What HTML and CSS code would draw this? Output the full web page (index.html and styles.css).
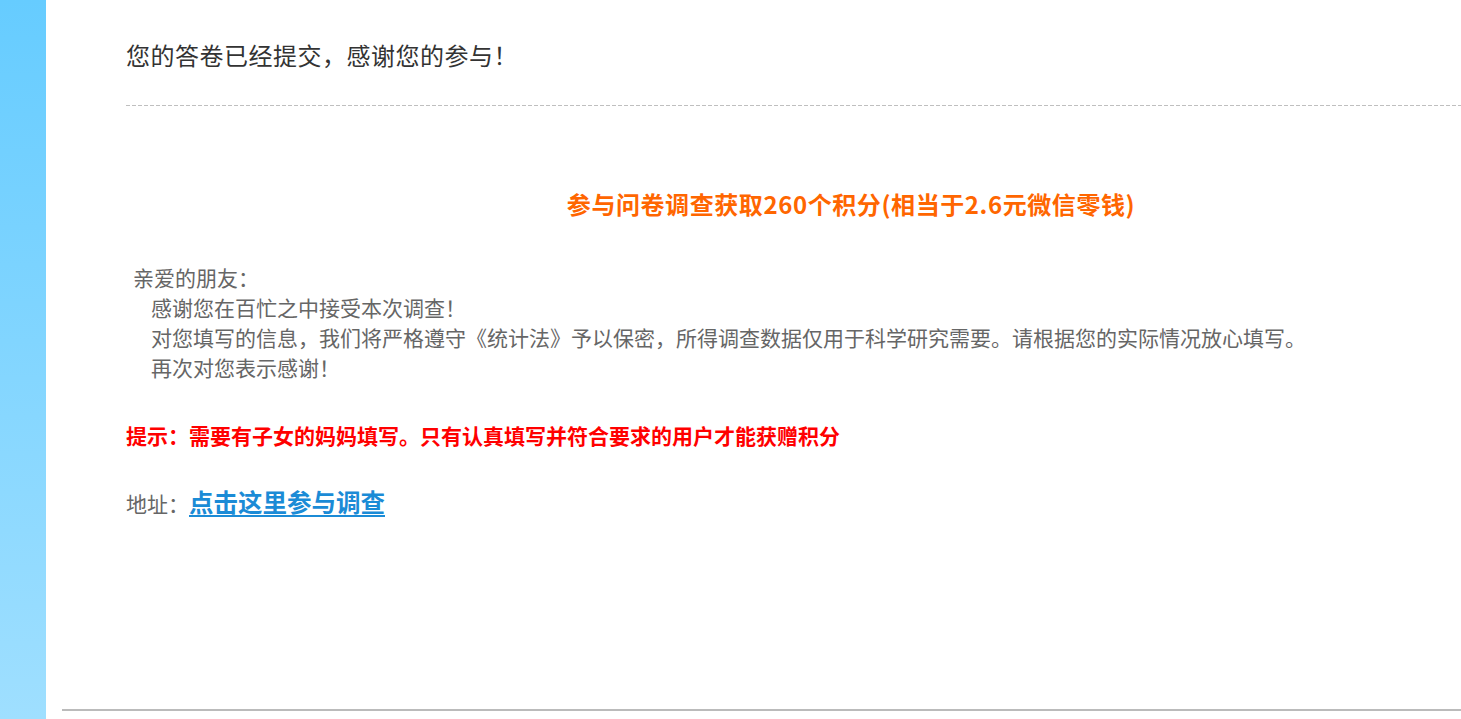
FILE: index.html
```html
<!DOCTYPE html>
<html lang="zh-CN">
<head>
<meta charset="utf-8">
<title>问卷已提交</title>
<link rel="stylesheet" href="styles.css">
</head>
<body>
<div class="page">
  <aside class="sidebar"></aside>
  <main class="main">
    <div class="content">
      <h1 class="title">您的答卷已经提交，感谢您的参与！</h1>
      <div class="dash"></div>
      <h2 class="reward">参与问卷调查获取260个积分(相当于2.6元微信零钱)</h2>
      <div class="letter">
        <p class="greet">亲爱的朋友：</p>
        <p class="line">感谢您在百忙之中接受本次调查！</p>
        <p class="line">对您填写的信息，我们将严格遵守《统计法》予以保密，所得调查数据仅用于科学研究需要。请根据您的实际情况放心填写。</p>
        <p class="line">再次对您表示感谢！</p>
      </div>
      <p class="hint">提示：需要有子女的妈妈填写。只有认真填写并符合要求的用户才能获赠积分</p>
      <p class="address">地址：<a class="link" href="#">点击这里参与调查</a></p>
    </div>
    <div class="footer-line"></div>
  </main>
</div>
</body>
</html>
```

FILE: styles.css
```css
html, body {
  margin: 0;
  padding: 0;
  background: #ffffff;
}
body {
  font-family: "Noto Sans CJK SC", "Noto Sans", sans-serif;
  color: #666666;
}
.page {
  display: flex;
  min-height: 719px;
  height: 719px;
  overflow: hidden;
}
.sidebar {
  width: 46px;
  flex: none;
  background: linear-gradient(to bottom, #66ccff 0%, #9fdfff 100%);
}
.main {
  flex: 1;
  display: flex;
  flex-direction: column;
  padding-left: 16px;
}
.content {
  flex: 1;
  padding-left: 64px;
}
.title {
  margin: 40px 0 0 0;
  font-size: 24px;
  letter-spacing: 0.5px;
  line-height: 30px;
  font-weight: normal;
  color: #333333;
}
.dash {
  margin-top: 35px;
  height: 1px;
  background: repeating-linear-gradient(to right, #bfbfbf 0 4px, transparent 4px 6px);
}
.reward {
  margin: 83px 0 0 0;
  padding-left: 115px;
  text-align: center;
  font-size: 24px;
  letter-spacing: 0.58px;
  line-height: 30px;
  font-weight: bold;
  color: #ff6600;
}
.letter {
  margin-top: 43px;
  font-size: 21px;
  line-height: 30px;
  color: #666666;
}
.letter p {
  margin: 0;
}
.greet {
  padding-left: 7px;
}
.line {
  padding-left: 25px;
}
.hint {
  margin: 38px 0 0 0;
  font-size: 21px;
  line-height: 30px;
  font-weight: bold;
  color: #ff0000;
}
.address {
  margin: 35px 0 0 0;
  font-size: 21px;
  line-height: 34px;
  color: #666666;
}
.link {
  font-size: 24.5px;
  font-weight: bold;
  color: #1b8bd6;
  text-decoration: underline;
  text-underline-offset: 3px;
  text-decoration-thickness: 2px;
}
.footer-line {
  height: 2px;
  background: #bbbbbb;
  margin-bottom: 8px;
}
```
